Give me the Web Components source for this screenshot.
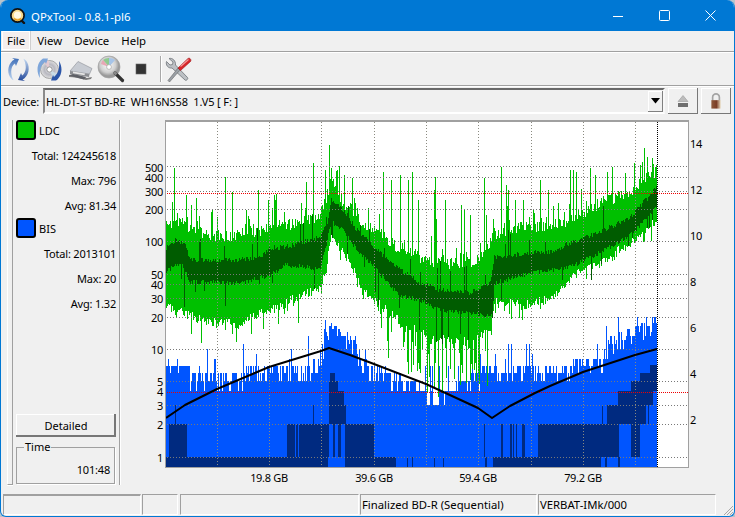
<!DOCTYPE html>
<html>
<head>
<meta charset="utf-8">
<title>QPxTool</title>
<style>
  html, body { margin: 0; padding: 0; width: 735px; height: 517px; overflow: hidden; background: #b9c4cc; }
  body { font: 11px "Noto Sans", "Liberation Sans", sans-serif; color: #000; }
</style>
</head>
<body>
<qp-window>
  <qp-titlebar>QPxTool - 0.8.1-pl6</qp-titlebar>
  <qp-menubar></qp-menubar>
  <qp-toolbar></qp-toolbar>
  <qp-devicebar>HL-DT-ST BD-RE  WH16NS58  1.V5 [ F: ]</qp-devicebar>
  <qp-main>
    <qp-sidepanel>
      <qp-stats label="LDC" color="#00c000" total="124245618" max="796" avg="81.34"></qp-stats>
      <qp-stats label="BIS" color="#0055ff" total="2013101" max="20" avg="1.32"></qp-stats>
    </qp-sidepanel>
    <qp-chart></qp-chart>
  </qp-main>
  <qp-statusbar></qp-statusbar>
</qp-window>

<script>
class QpWindow extends HTMLElement {
  constructor() {
    super();
    this.attachShadow({ mode: 'open' });
  }

  connectedCallback() {
    this.shadowRoot.innerHTML = `
      <style>
        :host {
          display: flex;
          flex-direction: column;
          box-sizing: border-box;
          width: 735px;
          height: 517px;
          background: #f0f0f0;
          border: solid #0078d4;
          border-width: 0 1px 1px 1px;
          border-radius: 8px 8px 6px 6px;
          overflow: hidden;
        }
      </style>
      <slot></slot>
    `;
  }
}

class QpTitlebar extends HTMLElement {
  constructor() {
    super();
    this.attachShadow({ mode: 'open' });
  }

  connectedCallback() {
    this.shadowRoot.innerHTML = `
      <style>
        :host {
          display: flex;
          align-items: center;
          flex: none;
          height: 31px;
          margin: 0 -1px;
          background: #0078d4;
          color: #fff;
          font-size: 11.4px;
        }
        .logo { margin: 0 5px 0 10px; }
        .text { flex: 1; padding-top: 1px; }
        .btns { display: flex; align-self: stretch; padding-right: 2px; }
        .btn { display: flex; width: 46px; align-items: center; justify-content: center; }
      </style>
      <svg class="logo" width="16" height="16" viewBox="0 0 16 16">
        <path d="M11 12l3 3" stroke="#111" stroke-width="2.4" stroke-linecap="round"/>
        <circle cx="7.5" cy="7.5" r="6.6" fill="#f7d98c" stroke="#111" stroke-width="1.7"/>
        <circle cx="7.5" cy="7" r="3.6" fill="#fff8e2"/>
        <path d="M4 10.5c2 2.2 5 2.2 7 0" stroke="#e39a1f" stroke-width="1.4" fill="none"/>
      </svg>
      <span class="text"><slot></slot></span>
      <div class="btns">
        <div class="btn"><svg width="10" height="10"><path d="M0 5.5h10" stroke="#fff"/></svg></div>
        <div class="btn"><svg width="11" height="11"><rect x=".5" y=".5" width="10" height="10" rx="1" fill="none" stroke="#fff"/></svg></div>
        <div class="btn"><svg width="11" height="11"><path d="M.5 .5l10 10M10.5 .5l-10 10" stroke="#fff"/></svg></div>
      </div>
    `;
  }
}

class QpMenubar extends HTMLElement {
  constructor() {
    super();
    this.attachShadow({ mode: 'open' });
  }

  connectedCallback() {
    const items = ['File', 'View', 'Device', 'Help'];
    this.shadowRoot.innerHTML = `
      <style>
        :host {
          display: flex;
          flex: none;
          box-sizing: border-box;
          height: 21px;
          padding: 0 0 1px 1px;
          border-bottom: 1px solid #a0a0a0;
          box-shadow: 0 1px 0 #fff;
          font-size: 11.4px;
        }
        span { display: flex; align-items: center; padding: 0 6px; }
        .on { background: #f4eeee; box-shadow: inset 0 0 0 1px #fff, 1px 0 0 #cfcfcf; padding: 0 5px; margin-right: 1px; }
      </style>
      ${items.map((m, i) => `<span class="${i ? '' : 'on'}">${m}</span>`).join('')}
    `;
  }
}

class QpToolbar extends HTMLElement {
  constructor() {
    super();
    this.attachShadow({ mode: 'open' });
  }

  connectedCallback() {
    this.shadowRoot.innerHTML = `
      <style>
        :host {
          display: flex;
          align-items: center;
          flex: none;
          box-sizing: border-box;
          height: 33px;
          padding: 0 0 0 4px;
          margin-top: 1px;
          border-bottom: 1px solid #a0a0a0;
          box-shadow: 0 1px 0 #fff;
        }
        svg { display: block; flex: none; }
        .sep { width: 1px; height: 26px; background: #a8a8a8; box-shadow: 1px 0 0 #fff; margin: 0 4px 0 0; }
      </style>
      <svg width="27" height="27" viewBox="0 0 27 27" style="margin-right:4px">
        <defs>
          <linearGradient id="a1" x1="0" y1="0" x2="0" y2="1"><stop offset="0" stop-color="#3f6fb8"/><stop offset="1" stop-color="#bcd4ef"/></linearGradient>
          <linearGradient id="a2" x1="0" y1="0" x2="0" y2="1"><stop offset="0" stop-color="#c2d8f0"/><stop offset="1" stop-color="#23489a"/></linearGradient>
        </defs>
        <path d="M9.5 3.5C3.5 6.5 1.5 15 5 21c1 1.6 2.2 2.6 3.6 3.2C5.500 19 5 11 9.800 7.500L11 10l3-7-7-1z" fill="url(#a1)"/>
        <path d="M17.500 23.500C23.500 20.500 25.500 12 22 6c-1-1.600-2.200-2.600-3.600-3.200C21.500 8 22 16 17.200 19.500L16 17l-3 7 7 1z" fill="url(#a2)"/>
      </svg>
      <svg width="27" height="27" viewBox="0 0 27 27" style="margin-right:4px">
        <defs>
          <radialGradient id="d1"><stop offset="0" stop-color="#f6f6f6"/><stop offset=".55" stop-color="#b8b8c0"/><stop offset="1" stop-color="#e0e0e0"/></radialGradient>
        </defs>
        <circle cx="13.500" cy="13.500" r="9" fill="url(#d1)" stroke="#8a8a8a" stroke-width=".7"/>
        <path d="M13.500 13.500L8 6.500a9 9 0 0 1 5-2z" fill="#e4c9d0"/>
        <path d="M13.500 13.500L21 18a9 9 0 0 1-4 4z" fill="#c9dbe6"/>
        <circle cx="13.500" cy="13.500" r="2.600" fill="#fff" stroke="#777" stroke-width=".7"/>
        <path d="M7 2.500C1.500 6 -.5 15 4 22c-.8-6 .5-13 5-16l1 2 2-5.500z" fill="#7ea6da"/>
        <path d="M20 24.500C25.500 21 27.500 12 23 5c.8 6-.5 13-5 16l-1-2-2 5.500z" fill="#2b55a8"/>
      </svg>
      <svg width="27" height="27" viewBox="0 0 27 27" style="margin-right:3px">
        <path d="M2 19c5-1 10 0 18 3l5-1-1 2-5 1c-7-2-12-3-17-3z" fill="#7b7b7b"/>
        <path d="M3 15L11 5.500l14 7-2.500 5.500z" fill="#c7cbd2" stroke="#8b8f96" stroke-width=".6"/>
        <path d="M3 15l19.500 3-.5 3L3 18z" fill="#8c8e92"/>
        <path d="M6 15.500l12 2-.5 1.800-11.500-2z" fill="#e6e6e6"/>
        <path d="M2 19.500l4-1.500 13 3-2 2.500z" fill="#5e6066"/>
      </svg>
      <svg width="28" height="29" viewBox="0 0 28 29" style="margin-right:10px">
        <defs>
          <radialGradient id="m1" cx=".45" cy=".4"><stop offset="0" stop-color="#fff"/><stop offset=".7" stop-color="#cfcfcf"/><stop offset="1" stop-color="#9a9a9a"/></radialGradient>
        </defs>
        <circle cx="12" cy="12" r="11" fill="url(#m1)" stroke="#a0a0a0" stroke-width=".7"/>
        <path d="M12 12L6 5a9 9 0 0 1 6-2z" fill="#8fc98f"/>
        <path d="M12 12L4 9a9 9 0 0 1 2-4z" fill="#e7a7b4"/>
        <path d="M12 12l6-7a9 9 0 0 0-6-2z" fill="#a6c4e8"/>
        <circle cx="12" cy="12" r="2.400" fill="#fff" stroke="#999" stroke-width=".6"/>
        <path d="M18 18l7.500 7.500" stroke="#333" stroke-width="3.200" stroke-linecap="round"/>
        <path d="M17 17l2.500 2.500" stroke="#888" stroke-width="3"/>
      </svg>
      <svg width="12" height="12" viewBox="0 0 12 12" style="margin-right:13px">
        <rect x="1" y="1" width="10" height="10" fill="#333" stroke="#666" stroke-width=".6"/>
      </svg>
      <div class="sep"></div>
      <svg width="27" height="27" viewBox="0 0 27 27">
        <path d="M4 2.500l4 3.500-.5 2.500-2.500.5L1.500 5.500C.5 9 3 12.500 7 12l13 12c1.200 1.200 3.700-1.300 2.500-2.500L10.500 9C11 5 7.500 1.500 4 2.500z" fill="#bcc0c4" stroke="#6f7478" stroke-width=".8"/>
        <path d="M3 24.500l1.500 1.500L15 14l-2-2z" fill="#9aa0a6" stroke="#666" stroke-width=".6"/>
        <path d="M13 12l2.500 2.500L25.500 5.500c1.200-1.500-.500-4.200-2.500-3z" fill="#d8262a" stroke="#9a1518" stroke-width=".6"/>
        <path d="M15.500 10.500L23.500 3.500" stroke="#f49a9a" stroke-width="1.200"/>
      </svg>
    `;
  }
}

class QpDevicebar extends HTMLElement {
  constructor() {
    super();
    this.attachShadow({ mode: 'open' });
  }

  connectedCallback() {
    this.shadowRoot.innerHTML = `
      <style>
        :host {
          display: flex;
          align-items: stretch;
          flex: none;
          box-sizing: border-box;
          height: 26px;
          margin-top: 2px;
          padding-left: 2px;
          font-size: 11px;
        }
        .label { align-self: center; width: 40px; letter-spacing: -.1px; padding-top: 1px; }
        .combo {
          flex: none;
          display: flex;
          align-items: center;
          box-sizing: border-box;
          width: 622px;
          border: 2px solid;
          border-color: #696969 #f8f8f8 #fff #8a8a8a;
          padding-left: 1px;
        }
        .text { flex: 1; white-space: pre; letter-spacing: -.12px; }
        .drop {
          display: flex;
          align-items: center;
          justify-content: center;
          width: 15px;
          height: 21px;
          background: #f0f0f0;
          box-shadow: inset -1px -1px 0 #808080, inset 1px 1px 0 #fff;
        }
        .side {
          display: flex;
          align-items: center;
          justify-content: center;
          box-sizing: border-box;
          width: 30px;
          height: 26px;
          margin-left: 3px;
          background: #f0f0f0;
          box-shadow: inset -1px -1px 0 #777, inset 1px 1px 0 #fff;
        }
      </style>
      <span class="label">Device:</span>
      <div class="combo">
        <span class="text"><slot></slot></span>
        <div class="drop"><svg width="9" height="6"><path d="M0 0h9l-4.500 5.500z" fill="#000"/></svg></div>
      </div>
      <div class="side">
        <svg width="12" height="13" viewBox="0 0 12 13"><path d="M6 .5L11 6.500H1z" fill="#bcbcbc" stroke="#9a9a9a" stroke-width=".6"/><rect x="1" y="8" width="10" height="4" fill="#6e6e6e"/></svg>
      </div>
      <div class="side">
        <svg width="12" height="16" viewBox="0 0 14 19">
          <defs><linearGradient id="l1"><stop offset="0" stop-color="#8e5a3c"/><stop offset=".55" stop-color="#7a3d26"/><stop offset="1" stop-color="#e5d5b8"/></linearGradient></defs>
          <path d="M3 9V5a4 4 0 0 1 8 0v4" fill="none" stroke="#a4a4a4" stroke-width="2"/>
          <rect x="1.500" y="8.500" width="11" height="10" fill="url(#l1)"/>
        </svg>
      </div>
    `;
  }
}

class QpMain extends HTMLElement {
  constructor() {
    super();
    this.attachShadow({ mode: 'open' });
  }

  connectedCallback() {
    this.shadowRoot.innerHTML = `
      <style>
        :host { display: flex; flex: 1; min-height: 0; margin-top: 6px; }
      </style>
      <slot></slot>
    `;
  }
}

class QpSidepanel extends HTMLElement {
  constructor() {
    super();
    this.attachShadow({ mode: 'open' });
  }

  connectedCallback() {
    this.shadowRoot.innerHTML = `
      <style>
        :host {
          display: flex;
          flex: none;
          box-sizing: border-box;
          width: 120px;
          height: 365px;
          margin-left: 6px;
          font-size: 11px;
        }
        .edge {
          box-sizing: border-box;
          flex: none;
          width: 6px;
          border: 1px solid #fff;
          border-top: 0;
          border-right: 1px solid #a0a0a0;
          border-bottom: 1px solid #a0a0a0;
          box-shadow: 0 1px 0 #fff;
        }
        .inner {
          display: flex;
          flex-direction: column;
          box-sizing: border-box;
          width: 107px;
          padding: 0 3px;
          border-right: 1px solid #a0a0a0;
          box-shadow: 1px 0 0 #fff;
        }
        .stats { flex: none; }
        button {
          flex: none;
          display: block;
          width: 100px;
          height: 23px;
          margin: auto 0 4px 0;
          padding: 0;
          font: inherit;
          color: #000;
          background: #f0f0f0;
          border: 0;
          box-shadow: inset -2px -2px 0 #777, inset 1px 1px 0 #fff;
        }
        fieldset {
          box-sizing: border-box;
          width: 99px;
          height: 43px;
          margin: 0 0 1px 0;
          padding: 0 4px 0 0;
          border: 1px solid #a0a0a0;
          box-shadow: 1px 1px 0 #fff;
          text-align: right;
        }
        legend { padding: 0 1px; margin-left: 7px; text-align: left; line-height: 12px; }
        .time { line-height: 15px; padding-top: 9px; letter-spacing: -.2px; }
      </style>
      <div class="edge"></div>
      <div class="inner">
        <div class="stats"><slot></slot></div>
        <button>Detailed</button>
        <fieldset><legend>Time</legend><div class="time">101:48</div></fieldset>
      </div>
    `;
  }
}

class QpStats extends HTMLElement {
  constructor() {
    super();
    this.attachShadow({ mode: 'open' });
  }

  connectedCallback() {
    const a = (n) => this.getAttribute(n);
    this.shadowRoot.innerHTML = `
      <style>
        :host { display: block; }
        .head { display: flex; align-items: center; height: 20px; margin-bottom: 3px; }
        .swatch {
          box-sizing: border-box;
          width: 20px;
          height: 20px;
          margin-right: 3px;
          border: 2px solid #000;
          border-radius: 3px;
          background: ${a('color')};
        }
        .row { height: 25px; line-height: 25px; text-align: right; letter-spacing: -.2px; }
      </style>
      <div class="head"><div class="swatch"></div><span>${a('label')}</span></div>
      <div class="row">Total: ${a('total')}</div>
      <div class="row">Max: ${a('max')}</div>
      <div class="row">Avg: ${a('avg')}</div>
    `;
  }
}

// chart geometry, in window pixels
const PLOT = { x0: 166, y0: 122, x1: 688, y1: 467, end: 657 };
const LEFT_TICKS = [[500, 167], [400, 177], [300, 191], [200, 209], [100, 241], [50, 274], [40, 284], [30, 298], [20, 317], [10, 349], [5, 381], [4, 391], [3, 405], [2, 424], [1, 457]];
const RIGHT_TICKS = [[14, 144], [12, 190], [10, 236], [8, 282], [6, 328], [4, 374], [2, 420]];
const BOTTOM_TICKS = [['19.8 GB', 269], ['39.6 GB', 374], ['59.4 GB', 478], ['79.2 GB', 583]];
const VGRID = [217, 269, 321, 374, 426, 478, 531, 583, 635];
const HGRID = [166, 177, 191, 209, 241, 274, 284, 298, 317, 349, 381, 405, 424, 457];

const LIGHT_TOP = [[166, 226], [175, 220], [190, 228], [210, 238], [235, 235], [260, 230], [280, 227], [300, 222], [320, 215], [327, 195], [333, 180], [340, 200], [350, 208], [360, 220], [375, 230], [400, 250], [420, 257], [440, 263], [470, 263], [485, 253], [493, 235], [520, 227], [550, 226], [570, 220], [600, 203], [630, 193], [645, 178], [657, 170]];
const LIGHT_BOT = [[166, 300], [175, 310], [190, 316], [215, 323], [240, 323], [260, 313], [280, 307], [300, 295], [320, 288], [326, 270], [330, 236], [345, 255], [355, 272], [362, 290], [380, 305], [400, 322], [430, 338], [470, 342], [490, 330], [494, 302], [530, 305], [550, 298], [570, 277], [600, 263], [630, 243], [657, 220]];
const DARK_TOP = [[166, 248], [175, 240], [184, 242], [190, 260], [240, 260], [260, 257], [270, 248], [285, 247], [300, 243], [320, 237], [327, 222], [331, 200], [345, 212], [355, 228], [374, 247], [400, 270], [420, 283], [440, 290], [470, 293], [490, 283], [494, 257], [530, 253], [550, 252], [570, 243], [600, 232], [630, 217], [657, 187]];
const DARK_BOT = [[166, 272], [180, 262], [190, 282], [240, 283], [270, 275], [285, 265], [320, 268], [327, 240], [331, 222], [345, 232], [355, 248], [374, 267], [400, 297], [420, 300], [440, 310], [470, 313], [492, 316], [494, 283], [530, 273], [570, 267], [600, 253], [630, 235], [657, 207]];
const BLUE_TOP = [[166, 381], [240, 381], [245, 373], [300, 373], [315, 366], [323, 350], [330, 325], [345, 338], [355, 350], [365, 366], [374, 373], [400, 381], [440, 391], [470, 381], [490, 373], [520, 373], [570, 373], [572, 366], [600, 366], [608, 345], [640, 332], [657, 321]];
const LEVELS = [457, 424, 405, 391, 381, 373, 366, 359, 354, 349, 344, 340, 336, 332, 329, 326, 323, 320, 317];
// navy blocks of the BIS trace: x0, x1, y0, y1
const NAVY = [
  [166, 328, 457, 467], [345, 396, 457, 467], [493, 601, 457, 467], [605, 607, 457, 467], [618, 620, 457, 467],
  [169, 187, 424, 457], [287, 295, 424, 457], [296, 298, 424, 457], [299, 329, 424, 457], [333, 335, 424, 457], [338, 341, 424, 457], [345, 374, 424, 457],
  [538, 619, 424, 457], [631, 640, 424, 457],
  [329, 346, 405, 424], [329, 344, 391, 405], [329, 338, 381, 391], [330, 335, 373, 381],
  [607, 646, 405, 424], [648, 649, 405, 424], [602, 603, 405, 424],
  [618, 653, 391, 405], [631, 657, 381, 391], [640, 657, 373, 381], [650, 657, 365, 373],
  [175, 176, 405, 424], [313, 314, 405, 424],
  [484, 485, 424, 457], [501, 503, 424, 457], [510, 512, 424, 457], [513, 514, 424, 457], [516, 517, 424, 457], [522, 525, 424, 457],
  [407, 408, 457, 467], [412, 413, 457, 467], [434, 435, 457, 467], [443, 444, 457, 467], [485, 487, 457, 467]
];
// tall single peaks of the LDC trace: x, top
const PEAKS = [[174, 168], [191, 205], [196, 198], [225, 177], [212, 210], [246, 210], [268, 200], [275, 200], [306, 182], [313, 163], [325, 170], [329, 145], [337, 170], [344, 175], [352, 178], [383, 172], [391, 180], [400, 175], [408, 180], [412, 172], [418, 200], [434, 190], [435, 177], [445, 200], [461, 205], [464, 210], [470, 215], [484, 178], [486, 215], [501, 167], [506, 185], [508, 190], [515, 200], [523, 200], [540, 180], [548, 190], [570, 170], [573, 170], [576, 172], [590, 168], [595, 175], [612, 167], [625, 173], [634, 163], [640, 165], [644, 148], [652, 158]];
const CURVE = [[166, 418], [185, 405], [217, 389], [269, 367], [321, 351], [329, 348], [350, 355], [374, 364], [426, 384], [478, 408], [492, 418], [510, 406], [535, 393], [550, 386], [583, 372], [635, 355], [657, 349]];

function lerp(pts, x) {
  for (let i = 1; i < pts.length; i++) {
    if (x <= pts[i][0]) {
      const [ax, ay] = pts[i - 1];
      const [bx, by] = pts[i];
      return ay + (by - ay) * (x - ax) / (bx - ax);
    }
  }
  return pts[pts.length - 1][1];
}

// small seeded generator so the noise is the same on every load
function seeded(a) {
  return () => {
    a = (a + 0x6d2b79f5) | 0;
    let t = Math.imul(a ^ (a >>> 15), 1 | a);
    t = (t + Math.imul(t ^ (t >>> 7), 61 | t)) ^ t;
    return ((t ^ (t >>> 14)) >>> 0) / 4294967296;
  };
}

class QpChart extends HTMLElement {
  constructor() {
    super();
    this.attachShadow({ mode: 'open' });
  }

  connectedCallback() {
    const w = PLOT.x1 - PLOT.x0;
    const h = PLOT.y1 - PLOT.y0;
    const tick = (t, y) => `<span style="top:${y - PLOT.y0 - 6}px">${t}</span>`;
    this.shadowRoot.innerHTML = `
      <style>
        :host {
          display: grid;
          grid-template-columns: 39px ${w}px 46px;
          grid-template-rows: ${h + 2}px 22px;
          flex: none;
          font-size: 11px;
          line-height: 16px;
          letter-spacing: -.3px;
        }
        .axis { position: relative; }
        .axis span { position: absolute; white-space: nowrap; }
        .left span { right: 3px; margin-top: 1px; }
        .right span { left: 2px; }
        .bottom { grid-column: 2; }
        .bottom span { top: 3px; transform: translateX(-50%); }
        .plot {
          border: solid #a0a0a0;
          border-width: 2px 1px 1px 1px;
          margin-left: -1px;
          margin-right: -1px;
          height: ${h}px;
          background: #fff;
        }
        canvas { display: block; }
      </style>
      <div class="axis left">${LEFT_TICKS.map(([t, y]) => tick(t, y)).join('')}</div>
      <div class="plot"><canvas width="${w}" height="${h}"></canvas></div>
      <div class="axis right">${RIGHT_TICKS.map(([t, y]) => tick(t, y)).join('')}</div>
      <div class="axis bottom">${BOTTOM_TICKS.map(([t, x]) => `<span style="left:${x - PLOT.x0}px">${t}</span>`).join('')}</div>
    `;
    this.draw(this.shadowRoot.querySelector('canvas').getContext('2d'));
  }

  draw(ctx) {
    const rect = (color, x0, x1, y0, y1) => {
      ctx.fillStyle = color;
      ctx.fillRect(x0 - PLOT.x0, Math.round(y0) - PLOT.y0, x1 - x0, Math.round(y1) - Math.round(y0));
    };
    const dotsH = (color, y, step) => {
      for (let x = PLOT.x0 + 1; x < PLOT.x1; x += step) rect(color, x, x + 1, y, y + 1);
    };
    const dotsV = (color, x, step) => {
      for (let y = PLOT.y0; y < PLOT.y1; y += step) rect(color, x, x + 1, y, y + 1);
    };

    this.drawBis(rect);
    this.drawLdc(rect);

    for (const y of HGRID) dotsH('#787878', y, 3);
    for (const x of VGRID) dotsV('#8a8a80', x, 3);
    dotsH('#f00000', 193, 2);
    dotsH('#f00000', 392, 2);
    dotsV('#000', PLOT.end, 2);

    ctx.strokeStyle = '#000';
    ctx.lineWidth = 2;
    ctx.lineJoin = 'round';
    ctx.beginPath();
    CURVE.forEach(([x, y], i) => {
      if (i) ctx.lineTo(x - PLOT.x0, y - PLOT.y0);
      else ctx.moveTo(x - PLOT.x0, y - PLOT.y0);
    });
    ctx.stroke();
  }

  drawBis(rect) {
    const rnd = seeded(20131);
    const blue = '#0055ff';
    for (let x = PLOT.x0; x < PLOT.end; x++) {
      let top = lerp(BLUE_TOP, x);
      const r = rnd();
      if (x > 400 && x < 470) {
        if (r < 0.3) top = x > 425 && x < 445 ? 405 : 391;
        else if (r > 0.85) top -= 22;
      } else if (x > 328 && x < 346) {
        top += r * 8 - 4;
      } else if (x < 190 && r < 0.75) {
        top = 366;
      } else if (r < 0.25) {
        top += 9;
      } else if (r > 0.93) {
        top -= 12 + rnd() * 22;
      } else if (r > 0.55) {
        top -= 7;
      }
      const snapped = LEVELS.reduce((a, b) => (Math.abs(b - top) < Math.abs(a - top) ? b : a));
      rect(blue, x, x + 1, snapped, 467);
    }
    for (const [x0, x1, y0, y1] of NAVY) rect('#002a80', x0, x1, y0, y1);
  }

  drawLdc(rect) {
    const rnd = seeded(124245);
    const light = '#00c000';
    const dark = '#005c00';
    const cols = [];
    for (let x = PLOT.x0; x < PLOT.end; x++) {
      const mid = x > 380 && x < 492;
      let t = lerp(LIGHT_TOP, x) + (rnd() - 0.5) * 12;
      let b = lerp(LIGHT_BOT, x) + (rnd() - 0.5) * 10;
      if (rnd() < 0.25) t -= rnd() * rnd() * 50;
      if (rnd() < (mid ? 0.5 : 0.2)) b += rnd() * (mid ? 55 : rnd() * 25);
      cols[x] = [t, b];
    }
    for (const [x, top] of PEAKS) {
      if (x < PLOT.end) cols[x][0] = top;
    }
    for (let x = PLOT.x0; x < PLOT.end; x++) {
      const [t, b] = cols[x];
      rect(light, x, x + 1, t, b);
      const dt = lerp(DARK_TOP, x) + (rnd() - 0.5) * 5;
      const db = lerp(DARK_BOT, x) + (rnd() - 0.5) * 5;
      rect(dark, x, x + 1, dt, db);
      const r = rnd();
      if (r < 0.07) rect(dark, x, x + 1, db, Math.min(b, db + 8 + rnd() * 28));
      else if (r < 0.12) rect(dark, x, x + 1, Math.max(t, dt - 6 - rnd() * 24), dt);
    }
  }
}

class QpStatusbar extends HTMLElement {
  constructor() {
    super();
    this.attachShadow({ mode: 'open' });
  }

  connectedCallback() {
    this.shadowRoot.innerHTML = `
      <style>
        :host {
          display: flex;
          flex: none;
          box-sizing: border-box;
          height: 24px;
          padding: 2px 0 1px 2px;
          font-size: 11.3px;
          position: relative;
        }
        .cell {
          box-sizing: border-box;
          flex: none;
          display: flex;
          align-items: center;
          padding-left: 1px;
          margin-right: 1px;
          border: 1px solid;
          border-color: #a0a0a0 #fff #fff #a0a0a0;
          white-space: nowrap;
        }
        .grip { position: absolute; right: 0; bottom: 0; }
      </style>
      <div class="cell" style="width:138px;border-top-width:2px"></div>
      <div class="cell" style="width:36px;margin-right:2px"></div>
      <div class="cell" style="width:179px"></div>
      <div class="cell" style="width:177px">Finalized BD-R (Sequential)</div>
      <div class="cell" style="width:178px">VERBAT-IMk/000</div>
      <svg class="grip" width="12" height="12"><path d="M11 2L2 11M11 5L5 11M11 8L8 11" stroke="#a8a8a8" fill="none"/></svg>
    `;
  }
}

customElements.define('qp-window', QpWindow);
customElements.define('qp-titlebar', QpTitlebar);
customElements.define('qp-menubar', QpMenubar);
customElements.define('qp-toolbar', QpToolbar);
customElements.define('qp-devicebar', QpDevicebar);
customElements.define('qp-main', QpMain);
customElements.define('qp-sidepanel', QpSidepanel);
customElements.define('qp-stats', QpStats);
customElements.define('qp-chart', QpChart);
customElements.define('qp-statusbar', QpStatusbar);
</script>
</body>
</html>
